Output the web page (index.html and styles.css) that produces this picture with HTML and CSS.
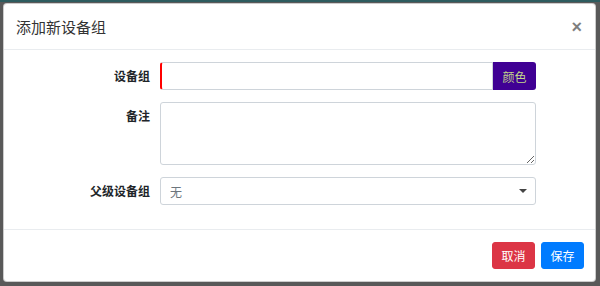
FILE: index.html
```html
<!DOCTYPE html>
<html>
<head>
    <title>添加新设备组</title>
    <link rel="stylesheet" href="styles.css">
</head>
<body>
<div class="backdrop">
    <div class="modal">
        <div class="modal-header">
            <h5 class="modal-title">添加新设备组</h5>
            <button type="button" class="close">&times;</button>
        </div>
        <div class="modal-body">
            <div class="form-row">
                <label class="form-label">设备组</label>
                <div class="input-group">
                    <input type="text" class="form-control required">
                    <button type="button" class="btn-color">颜色</button>
                </div>
            </div>
            <div class="form-row">
                <label class="form-label label-top">备注</label>
                <textarea class="form-control notes"></textarea>
            </div>
            <div class="form-row">
                <label class="form-label">父级设备组</label>
                <div class="select-wrap">
                    <select class="form-control select">
                        <option>无</option>
                    </select>
                </div>
            </div>
        </div>
        <div class="modal-footer">
            <button type="button" class="btn btn-danger">取消</button>
            <button type="button" class="btn btn-primary">保存</button>
        </div>
    </div>
</div>
</body>
</html>
```

FILE: styles.css
```css
html, body {
    margin: 0;
    height: 100%;
}

body {
    background-color: #595959;
    font-family: "Noto Sans CJK SC", "Liberation Sans", sans-serif;
    font-size: 12px;
    color: #212529;
}

.backdrop {
    height: 100%;
    box-sizing: border-box;
    padding: 3px 0 0 3px;
    background: linear-gradient(#2d5c5f 0, #2d5c5f 2px, transparent 2px);
}

.modal {
    width: 593px;
    height: 279px;
    box-sizing: border-box;
    background-color: #fff;
    border: 1px solid rgba(0, 0, 0, 0.2);
    border-radius: 4px;
    display: flex;
    flex-direction: column;
}

.modal-header {
    display: flex;
    align-items: center;
    justify-content: space-between;
    padding: 12px 12px 12px 12px;
    border-bottom: 1px solid #e9ecef;
}

.modal-title {
    margin: 0;
    font-size: 15px;
    line-height: 21px;
    font-weight: 400;
    color: #333;
}

.close {
    border: 0;
    background: none;
    padding: 0;
    margin-right: 1px;
    font-family: "Liberation Sans", sans-serif;
    font-size: 18px;
    line-height: 18px;
    font-weight: 700;
    color: #000;
    opacity: 0.5;
}

.modal-body {
    padding: 12px 12px 0 12px;
    flex: 1;
}

.form-row {
    display: grid;
    grid-template-columns: 134px 376px;
    column-gap: 10px;
    align-items: center;
    margin-bottom: 12px;
}

.form-label {
    text-align: right;
    font-weight: 700;
    font-size: 12px;
    line-height: 18px;
}

.label-top {
    align-self: start;
    padding-top: 5px;
}

.form-control {
    box-sizing: border-box;
    width: 100%;
    height: 28px;
    margin: 0;
    padding: 4px 9px;
    border: 1px solid #ced4da;
    border-radius: 3px;
    font-family: inherit;
    font-size: 12px;
    color: #495057;
    background-color: #fff;
}

.input-group {
    display: flex;
}

.input-group .form-control {
    flex: 1;
    border-top-right-radius: 0;
    border-bottom-right-radius: 0;
}

.required {
    border-left: 2px solid #f00;
}

.btn-color {
    width: 43px;
    height: 28px;
    border: 0;
    border-radius: 0 3px 3px 0;
    background-color: #400094;
    color: #c3d88a;
    font-family: inherit;
    font-size: 12px;
    padding: 0;
}

.notes {
    height: 63px;
    resize: vertical;
    display: block;
}

.select-wrap {
    position: relative;
}

.select {
    appearance: none;
    -webkit-appearance: none;
    color: #6c757d;
}

.select-wrap::after {
    content: "";
    position: absolute;
    right: 9px;
    top: 12px;
    border-top: 4px solid #444;
    border-left: 4px solid transparent;
    border-right: 4px solid transparent;
}

.modal-footer {
    display: flex;
    justify-content: flex-end;
    gap: 6px;
    padding: 12px 11px 12px 12px;
    border-top: 1px solid #e9ecef;
}

.btn {
    width: 43px;
    height: 27px;
    padding: 0;
    border: 1px solid transparent;
    border-radius: 3px;
    font-family: inherit;
    font-size: 12px;
    color: #fff;
}

.btn-danger {
    background-color: #dc3545;
    border-color: #dc3545;
}

.btn-primary {
    background-color: #007bff;
    border-color: #007bff;
}
```
